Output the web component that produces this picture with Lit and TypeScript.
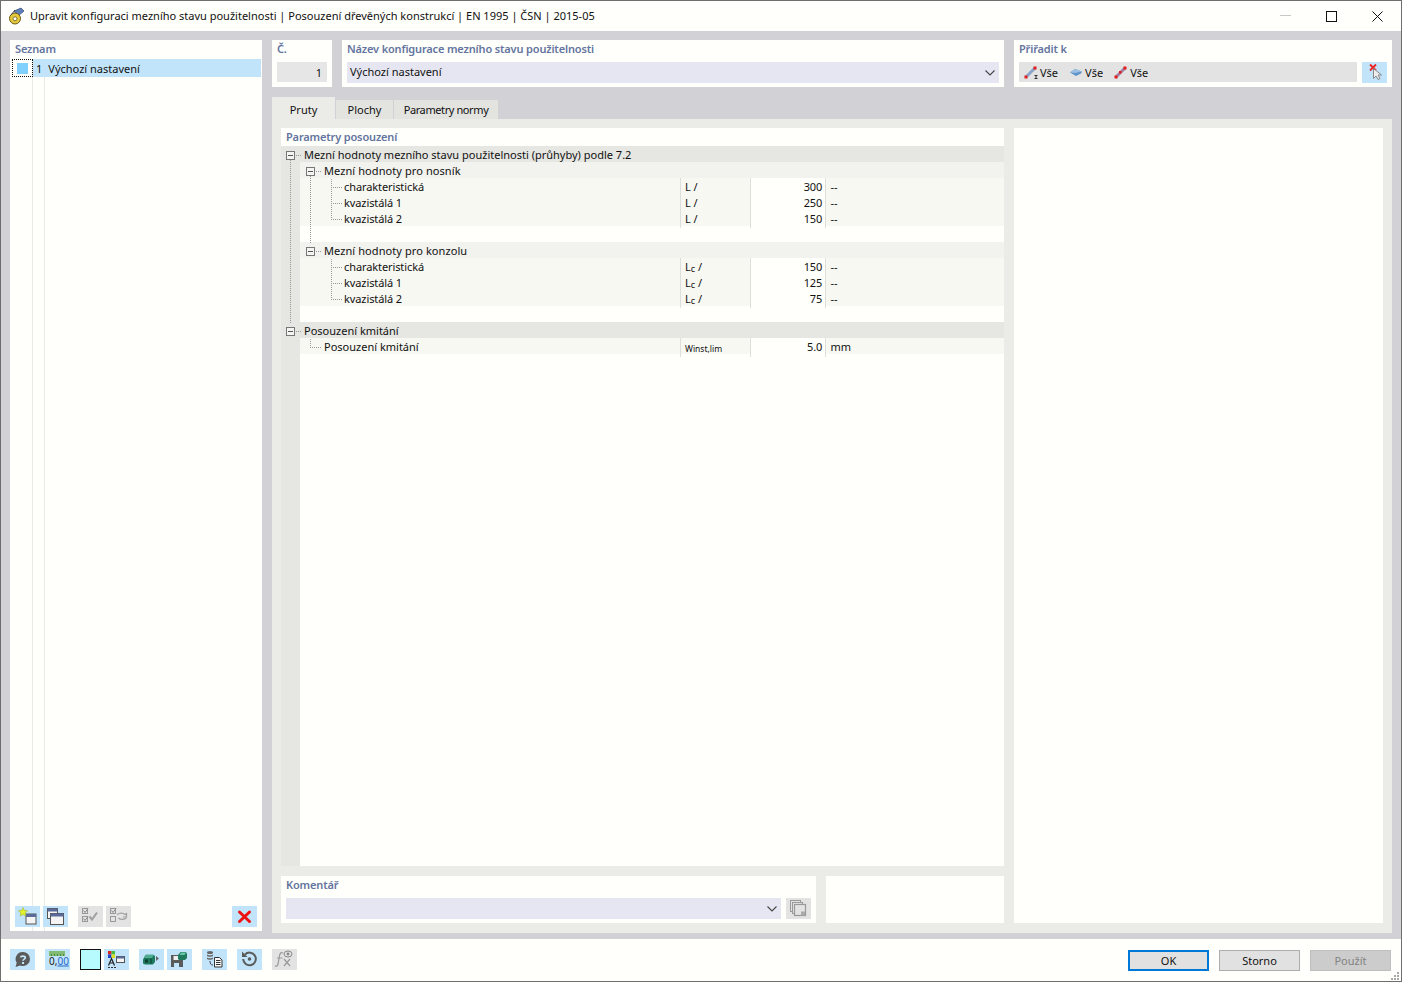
import { LitElement, html, css, svg } from "lit";
import { customElement } from "lit/decorators.js";

const icons: Record<string, any> = {
  newItem: svg`<rect x="11" y="8" width="10" height="10" fill="#f4f4f4" stroke="#555"/><rect x="11" y="8" width="10" height="3" fill="#5a6a9a"/><path d="M8 1.500l1.300 3 3.200.3-2.400 2.100.7 3.200L8 8.400l-2.800 1.700.7-3.200-2.400-2.100 3.200-.3z" fill="#e2f22a" stroke="#9aa820" stroke-width=".5"/>`,
  copyItem: svg`<rect x="4.500" y="2.500" width="10" height="10" fill="#f4f4f4" stroke="#555"/><rect x="4.500" y="2.500" width="10" height="3" fill="#5a6a9a"/><rect x="7.500" y="7.500" width="13" height="11" fill="#f4f4f4" stroke="#555"/><rect x="7.500" y="7.500" width="13" height="3" fill="#5a6a9a"/>`,
  checkAll: svg`<rect x="4.500" y="2.500" width="5" height="5" fill="none" stroke="#999"/><rect x="4.500" y="10.500" width="5" height="5" fill="none" stroke="#999"/><path d="M5.500 4.500l1.500 2 3-4M5.500 12.500l1.500 2 3-4" fill="none" stroke="#888"/><path d="M11.500 10.500l2.500 3 5-7" fill="none" stroke="#a0a0a0" stroke-width="2"/>`,
  checkSwap: svg`<rect x="4.500" y="2.500" width="5" height="5" fill="none" stroke="#999"/><rect x="4.500" y="10.500" width="5" height="5" fill="none" stroke="#999"/><path d="M5.500 4.500l1.500 2 3-4" fill="none" stroke="#888"/><path d="M11 8.500c3-1.800 6-1.800 8 0l1.500-1v3.500H17M20.500 12c-3 1.800-6 1.800-8 0" fill="none" stroke="#a0a0a0" stroke-width="1.200"/>`,
  del: svg`<path d="M7.500 6l10 9.500M17.500 6l-10 9.500" stroke="#ee1111" stroke-width="3" stroke-linecap="round"/>`,
  help: svg`<path d="M13 3a7 7 0 0 1 0 14c-1 0-2-.2-2.800-.6L5.500 18l1.200-4.300A7 7 0 0 1 13 3z" fill="#5a5a5a"/><path d="M10.500 8.300c.2-1.500 4.700-1.800 4.800.3 0 1.500-2.300 1.500-2.300 3.200" fill="none" stroke="#c2e4fb" stroke-width="1.700"/><rect x="12" y="13" width="2" height="2" fill="#c2e4fb"/>`,
  ruler: svg`<rect x="4" y="2" width="16" height="5" fill="#83bb72"/><path d="M6.500 5v2M9.500 5v2M12.500 5v2M15.500 5v2M18.500 5v2" stroke="#4a8a4a"/>
    <text x="4" y="15.500" font-size="10" font-family="Noto Sans, sans-serif" fill="#222">0,<tspan fill="#2468c8" text-decoration="underline">00</tspan></text>`,
  colors: svg`<rect x="4" y="2" width="3.500" height="3.500" fill="#d22"/><rect x="7.500" y="2" width="3.500" height="3.500" fill="#4b4"/><rect x="4" y="5.500" width="3.500" height="3.500" fill="#24c"/><rect x="7.500" y="5.500" width="3.500" height="3.500" fill="#dd2"/><rect x="12.500" y="7.500" width="8" height="6" fill="#f4f4f4" stroke="#555"/><rect x="12.500" y="7.500" width="8" height="2" fill="#5a6a9a"/><path d="M4.500 16.500l3-7 3 7M5.700 14h3.600" fill="none" stroke="#222" stroke-width="1.200"/><path d="M4 18.500h2M7 18.500h2M10 18.500h2" stroke="#333"/>`,
  box: svg`<path d="M4 10.500l2.500-4.500h8l1.500 1v6l-2 2.500H6l-2-1z" fill="#1d7a5e"/><path d="M7 5.500h8l-2 3.500H5z" fill="#4fae92"/><rect x="6" y="10.500" width="3" height="3" fill="#0c3f32"/><path d="M12 9.500v5" stroke="#0c3f32"/><path d="M17 7l3 2.500-3 2.500z" fill="#666"/>`,
  save: svg`<path d="M4 6h12v12H4z" fill="#5a5a5a"/><rect x="6.500" y="7" width="6" height="4" fill="#eee"/><rect x="7" y="14" width="5" height="4" fill="#c2e4fb"/><path d="M11 6l2.500-3h5.500l1 2v4l-2 2h-6l-1-1z" fill="#1d7a5e"/><path d="M14 3.500h5l-1.500 2.500h-5z" fill="#6bc4a8"/>`,
  dbDoc: svg`<ellipse cx="8" cy="3.500" rx="3" ry="1.500" fill="#666"/><path d="M5 5.500c1 1 5 1 6 0v1.500c-1 1-5 1-6 0zM5 8.500c1 1 5 1 6 0V10c-1 1-5 1-6 0z" fill="#666"/><path d="M8 12c0 3 1 4 3 4" fill="none" stroke="#444"/><path d="M12.500 8.500h5l2.500 2.500v7h-7.500z" fill="#f8f8f8" stroke="#333"/><path d="M14 11.500h4.500M14 13.500h4.500M14 15.500h4.500" stroke="#333"/>`,
  reset: svg`<path d="M8 5.500A6.300 6.300 0 1 1 6.200 10" fill="none" stroke="#5a5a5a" stroke-width="2"/><path d="M5 2.500v5.500h5.500z" fill="#5a5a5a"/><circle cx="12.500" cy="10" r="1.800" fill="#5a5a5a"/>`,
  fx: svg`<path d="M11 4c-2-1-3 0-3.500 3L6 15c-.5 2-1.500 2.500-3 2M5 9h5.500" fill="none" stroke="#999" stroke-width="1.200"/><path d="M12 10l6 7M18 10l-6 7" stroke="#999" stroke-width="1.200"/><ellipse cx="16" cy="5" rx="4" ry="3" fill="none" stroke="#888"/><circle cx="16" cy="5" r="1.400" fill="#888"/>`,
  stack: svg`<rect x="4.500" y="2.500" width="10" height="11" fill="#e3e3e3" stroke="#999"/><rect x="6.500" y="4.500" width="10" height="11" fill="#e3e3e3" stroke="#999"/><rect x="8.500" y="6.500" width="11" height="11" fill="#e3e3e3" stroke="#999" stroke-width="1.200"/><rect x="15" y="13.500" width="4" height="4" fill="#aaa"/>`,
  pick: svg`<path d="M8 2.500l6 6M14 2.500l-6 6" stroke="#ee2222" stroke-width="1.800"/><path d="M11.500 6.500v10l2.500-2.500 2 3.500 2-1-2-3.500h3.500z" fill="#eee" stroke="#888"/>`,
};

const ic = (name: string, w = 25, h = 21) =>
  html`<svg width=${w} height=${h} viewBox="0 0 25 21" class="ic">${icons[name]}</svg>`;

type Row =
  | { kind: "group" | "sub" | "empty"; text?: string }
  | { kind: "leaf"; text: string; unit: any; value: string; rest: string; indent?: boolean };

const lc = html`L<sub>c</sub> /`;
const rows: Row[] = [
  { kind: "group", text: "Mezní hodnoty mezního stavu použitelnosti (průhyby) podle 7.2" },
  { kind: "sub", text: "Mezní hodnoty pro nosník" },
  { kind: "leaf", text: "charakteristická", unit: "L /", value: "300", rest: "--" },
  { kind: "leaf", text: "kvazistálá 1", unit: "L /", value: "250", rest: "--" },
  { kind: "leaf", text: "kvazistálá 2", unit: "L /", value: "150", rest: "--" },
  { kind: "empty" },
  { kind: "sub", text: "Mezní hodnoty pro konzolu" },
  { kind: "leaf", text: "charakteristická", unit: lc, value: "150", rest: "--" },
  { kind: "leaf", text: "kvazistálá 1", unit: lc, value: "125", rest: "--" },
  { kind: "leaf", text: "kvazistálá 2", unit: lc, value: "75", rest: "--" },
  { kind: "empty" },
  { kind: "group", text: "Posouzení kmitání" },
  { kind: "leaf", indent: true, text: "Posouzení kmitání", unit: html`<span class="small">Winst,lim</span>`, value: "5.0", rest: "mm" },
];

const chevron = html`<svg class="chev" width="10" height="6" viewBox="0 0 10 6"><path d="M.5.500L5 5 9.500.500" fill="none" stroke="#444" stroke-width="1.100"/></svg>`;

const memberIcon = (withI: boolean) => html`<svg width="15" height="13" viewBox="0 0 15 13">
  <path d="M2 11L11 2" stroke=${withI ? "#8aa3cc" : "#a07f9f"} stroke-width="3"/>
  <rect x="0.500" y="9.500" width="3" height="3" fill="#e51c1c"/><rect x="9.500" y="0.500" width="3" height="3" fill="#e51c1c"/>
  ${withI ? svg`<path d="M10.500 9.500h3M10.500 12.500h3M12 9.500v3" stroke="#333"/>` : svg`<rect x="5" y="5" width="2.500" height="2.500" fill="#e51c1c"/>`}
</svg>`;
const surfaceIcon = html`<svg width="15" height="13" viewBox="0 0 15 13"><path d="M1 6.500L6 3l7 2.500-1 2L7 10z" fill="#5f93c9"/><path d="M1 6.500L6 3l7 2.500-7 1.500z" fill="#9cbfe4"/></svg>`;

@customElement("app-root")
export class AppRoot extends LitElement {
  static styles = css`
    :host { display: block; width: 1402px; height: 982px; font: 11px/16px "Noto Sans", sans-serif; color: #111; }
    * { box-sizing: border-box; }
    .ic { display: block; }
    .window { width: 1402px; height: 982px; border: 1px solid #6e6e6e; display: flex; flex-direction: column; background: #fffffb; }
    .title { height: 30px; display: flex; align-items: center; padding: 0 1px 0 7px; flex: none; }
    .title .text { margin-left: 4px; flex: 1; font-size: 11px; white-space: nowrap; }
    .ctrl { width: 46px; height: 30px; display: flex; align-items: center; justify-content: center; }
    .body { height: 908px; flex: none; background: #d2d2d6; padding: 9px 9px 0 9px; display: flex; gap: 10px; align-items: flex-start; }
    .panel { background: #fffffb; }
    .label { color: #63749f; font-weight: 600; white-space: nowrap; line-height: 18px; letter-spacing: -0.155px; }
    .list { width: 252px; height: 891px; display: flex; flex-direction: column; position: relative; }
    .list .label { padding-left: 5px; height: 19px; }
    .list-body { flex: 1; display: flex; flex-direction: column; background:
      linear-gradient(#e9e9e5,#e9e9e5) 22px 0/1px 100% no-repeat,
      linear-gradient(#e9e9e5,#e9e9e5) 34px 0/1px 100% no-repeat; }
    .list-row { height: 18px; display: flex; align-items: stretch; margin-right: 1px; }
    .list-mark { width: 21px; margin-left: 2px; border: 1px dotted #111; display: flex; align-items: center; justify-content: center; }
    .swatch { width: 11px; height: 11px; background: #7fd0fc; }
    .list-sel { flex: 1; background: #c2e4fb; display: flex; line-height: 20px; padding-left: 3px; gap: 6px; white-space: nowrap; }
    .list-tools { margin-top: auto; display: flex; gap: 3px; padding: 0 5px 4px 5px; }
    .btn { width: 25px; height: 21px; background: #c2e4fb; flex: none; display: block; }
    .btn.off { background: #e3e3e3; }
    .gap7 { margin-left: 7px; }
    .push { margin-left: auto; }
    .right { width: 1120px; display: flex; flex-direction: column; }
    .top { display: flex; gap: 10px; height: 47px; }
    .top .panel { padding: 0 5px; }
    .top .label { height: 22px; line-height: 18px; }
    .no { width: 60px; }
    .no .val { height: 20px; background: #e6e6e6; text-align: right; padding-right: 5px; line-height: 21px; }
    .name { width: 662px; }
    .combo { height: 21px; background: #e6e6f2; display: flex; align-items: center; padding: 0 4px 0 3px; justify-content: space-between; }
    .combo span { line-height: 19px; height: 19px; margin-bottom: 2px; }
    .assign { width: 378px; }
    .assign-row { display: flex; gap: 5px; }
    .strip { flex: 1; height: 20px; background: #e3e3e3; display: flex; align-items: center; padding: 1px 0 0 5px; gap: 11px; }
    .strip span { display: flex; align-items: center; gap: 1px; }
    .tabs { display: flex; margin-top: 10px; height: 22px; align-items: flex-end; flex: none; }
    .tab { height: 19px; padding: 0; background: #e3e3e0; line-height: 20px; text-align: center; white-space: nowrap; }
    .tab.active { height: 22px; width: 63px; background: #ebebe7; line-height: 26px; margin-right: 1px; }
    .tab.plochy { width: 57px; margin-right: 1px; }
    .tab.norm { width: 104px; letter-spacing: -0.4px; }
    .tabbody { height: 814px; background: #ebebe7; padding: 9px; display: flex; gap: 10px; }
    .col { width: 723px; display: flex; flex-direction: column; gap: 10px; }
    .params { height: 738px; display: flex; flex-direction: column; }
    .params > .label { height: 18px; padding-left: 5px; }
    .tree { flex: 1; position: relative; background: linear-gradient(#e6e6e2,#e6e6e2) 0 0/19px 100% no-repeat; }
    .lines { position: absolute; left: 0; top: 1px; pointer-events: none; }
    .row { height: 16px; line-height: 18px; white-space: nowrap; }
    .row.group { background: #e6e6e2; padding-left: 23px; }
    .row.sub { background: #f2f2ee; margin-left: 19px; padding-left: 24px; letter-spacing: 0.08px; }
    .row.leaf { margin-left: 19px; display: grid; grid-template-columns: 381px 70px 75px 1fr; background: #f7f8f2; }
    .cell { border-right: 1px solid #dededA; padding-left: 4px; }
    .cell.name-c { padding-left: 44px; letter-spacing: -0.1px; }
    .row.in .name-c { padding-left: 24px; letter-spacing: 0; }
    .cell.value { background: #fffffb; text-align: right; padding: 0 3px 0 0; letter-spacing: -0.2px; }
    .cell.rest { border: 0; padding-left: 4.500px; }
    .small { font-size: 8.500px; display: inline-block; transform: translateY(1px); }
    sub { font-size: 9px; line-height: 0; vertical-align: -1px; }
    .bottom { height: 47px; display: flex; gap: 10px; }
    .comment { width: 535px; padding: 0 5px; }
    .comment .label { height: 22px; line-height: 18px; }
    .comment-row { display: flex; gap: 5px; }
    .comment-row .combo { flex: 1; }
    .other { flex: 1; }
    .side { width: 369px; height: 795px; }
    .foot { flex: 1; display: flex; align-items: center; padding: 0 10px 1px 9px; position: relative; }
    .foot .btn { margin-right: 3px; }
    .foot .g10 { margin-left: 7px; }
    .color { width: 21px; height: 21px; background: #b8fbff; border: 1px solid #111; margin: 0 3px 0 7px; flex: none; }
    .actions { margin-left: auto; margin-top: 2px; display: flex; gap: 10px; }
    .act { width: 81px; height: 21px; background: #e1e1e1; border: 1px solid #adadad; text-align: center; line-height: 20px; }
    .act.def { border: 2px solid #0078d7; line-height: 18px; }
    .act.dis { background: #cccccc; border-color: #bfbfbf; color: #838383; }
    .grip { position: absolute; right: 1px; bottom: 1px; }
  `;

  private renderRow(r: Row) {
    if (r.kind === "empty") return html`<div class="row"></div>`;
    if (r.kind === "leaf")
      return html`<div class="row leaf ${r.indent ? "in" : ""}">
        <div class="cell name-c">${r.text}</div>
        <div class="cell">${r.unit}</div>
        <div class="cell value">${r.value}</div>
        <div class="cell rest">${r.rest}</div>
      </div>`;
    return html`<div class="row ${r.kind}">${r.text}</div>`;
  }

  private treeLines() {
    const box = (x: number, y: number) => svg`
      <rect x=${x + 0.5} y=${y + 0.5} width="8" height="8" fill="#f4f4f0" stroke="#777"/>
      <path d="M${x + 2} ${y + 4.5}h5" stroke="#555"/>`;
    const dots = "1 1";
    const v = (x: number, a: number, b: number) =>
      svg`<path d="M${x + 0.5} ${a}V${b}" stroke="#999" stroke-dasharray=${dots}/>`;
    const h_ = (a: number, b: number, y: number) =>
      svg`<path d="M${a} ${y + 0.5}H${b}" stroke="#999" stroke-dasharray=${dots}/>`;
    return svg`<svg class="lines" width="120" height="210">
      ${v(9, 13, 176)}${v(29, 29, 96)}${v(50, 32, 72)}${v(50, 112, 152)}${v(29, 192, 200)}
      ${h_(15, 21, 8)}${h_(15, 21, 184)}${h_(35, 41, 24)}${h_(35, 41, 104)}
      ${h_(50, 61, 40)}${h_(50, 61, 56)}${h_(50, 61, 72)}
      ${h_(50, 61, 120)}${h_(50, 61, 136)}${h_(50, 61, 152)}
      ${h_(29, 40, 200)}
      ${box(5, 4)}${box(25, 20)}${box(25, 100)}${box(5, 180)}
    </svg>`;
  }

  render() {
    return html`<div class="window">
      <div class="title">
        <svg width="18" height="18" viewBox="0 0 18 18" class="ic">
          <path d="M6 4l7-3 3 3-6 5z" fill="#5e7fb8" stroke="#33466e" stroke-width=".7"/>
          <circle cx="7" cy="11.500" r="5.500" fill="#e5c93a" stroke="#6a5a1e"/>
          <circle cx="7" cy="11.800" r="2" fill="#fffffb" stroke="#6a5a1e" stroke-width=".8"/>
          <path d="M3 8l4-5" stroke="#444" stroke-width="1"/>
        </svg>
        <div class="text">Upravit konfiguraci mezního stavu použitelnosti | Posouzení dřevěných konstrukcí | EN 1995 | ČSN | 2015-05</div>
        <div class="ctrl"><svg width="11" height="2"><rect width="11" height="1" fill="#c8c8c8"/></svg></div>
        <div class="ctrl"><svg width="11" height="11"><rect x=".5" y=".5" width="10" height="10" fill="none" stroke="#111"/></svg></div>
        <div class="ctrl"><svg width="11" height="11"><path d="M.5.500l10 10M10.500.500l-10 10" stroke="#111"/></svg></div>
      </div>
      <div class="body">
        <div class="panel list">
          <div class="label">Seznam</div>
          <div class="list-body">
            <div class="list-row">
              <div class="list-mark"><div class="swatch"></div></div>
              <div class="list-sel"><div>1</div><div>Výchozí nastavení</div></div>
            </div>
            <div class="list-tools">
              <div class="btn">${ic("newItem")}</div>
              <div class="btn">${ic("copyItem")}</div>
              <div class="btn off gap7">${ic("checkAll")}</div>
              <div class="btn off">${ic("checkSwap")}</div>
              <div class="btn push">${ic("del")}</div>
            </div>
          </div>
        </div>
        <div class="right">
          <div class="top">
            <div class="panel no"><div class="label">Č.</div><div class="val">1</div></div>
            <div class="panel name"><div class="label">Název konfigurace mezního stavu použitelnosti</div>
              <div class="combo"><span>Výchozí nastavení</span>${chevron}</div></div>
            <div class="panel assign"><div class="label">Přiřadit k</div>
              <div class="assign-row">
                <div class="strip"><span>${memberIcon(true)}Vše</span><span>${surfaceIcon}Vše</span><span>${memberIcon(false)}Vše</span></div>
                <div class="btn">${ic("pick")}</div>
              </div></div>
          </div>
          <div class="tabs">
            <div class="tab active">Pruty</div>
            <div class="tab plochy">Plochy</div>
            <div class="tab norm">Parametry normy</div>
          </div>
          <div class="tabbody">
            <div class="col">
              <div class="panel params">
                <div class="label">Parametry posouzení</div>
                <div class="tree">
                  ${rows.map((r) => this.renderRow(r))}
                  ${this.treeLines()}
                </div>
              </div>
              <div class="bottom">
                <div class="panel comment"><div class="label">Komentář</div>
                  <div class="comment-row"><div class="combo"><span></span>${chevron}</div><div class="btn off">${ic("stack")}</div></div></div>
                <div class="panel other"></div>
              </div>
            </div>
            <div class="panel side"></div>
          </div>
        </div>
      </div>
      <div class="foot">
        <div class="btn">${ic("help")}</div>
        <div class="btn g10">${ic("ruler")}</div>
        <div class="color"></div>
        <div class="btn">${ic("colors")}</div>
        <div class="btn g10">${ic("box")}</div>
        <div class="btn">${ic("save")}</div>
        <div class="btn g10">${ic("dbDoc")}</div>
        <div class="btn g10">${ic("reset")}</div>
        <div class="btn off g10">${ic("fx")}</div>
        <div class="actions">
          <div class="act def">OK</div>
          <div class="act">Storno</div>
          <div class="act dis">Použít</div>
        </div>
        <svg class="grip" width="9" height="9"><path d="M6 1h2v2H6zM3 4h2v2H3zM6 4h2v2H6zM0 7h2v2H0zM3 7h2v2H3zM6 7h2v2H6z" fill="#aaa"/></svg>
      </div>
    </div>`;
  }
}
